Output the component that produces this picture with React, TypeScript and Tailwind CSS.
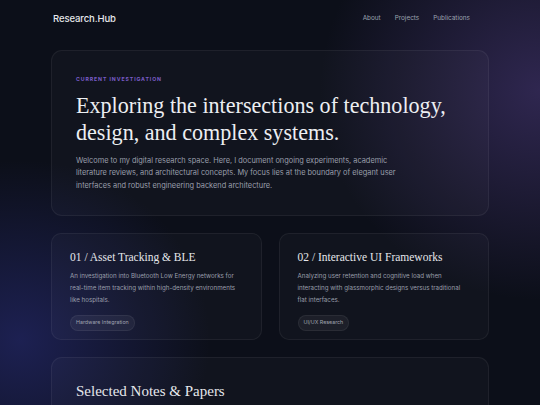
import React from "react";

const serif = { fontFamily: '"Liberation Serif", "DejaVu Serif", serif' };

export default function App() {
  return (
    <div
      className="relative w-[540px] h-[405px] overflow-hidden bg-[#0c0f19] text-white"
      style={{ fontFamily: 'Inter, "Noto Sans", sans-serif' }}
    >
      <div className="pointer-events-none absolute inset-0 bg-[radial-gradient(ellipse_220px_210px_at_540px_90px,rgba(76,58,125,0.55),transparent)]" />
      <div className="pointer-events-none absolute inset-0 bg-[radial-gradient(ellipse_190px_180px_at_20px_340px,rgba(40,44,120,0.6),transparent)]" />
      <div className="relative">
        <nav className="flex items-center h-[38px] pl-[53px] pr-[70px]">
          <span className="text-[9.5px] font-medium text-[#e5e7eb] tracking-[-0.1px]">Research.Hub</span>
          <div className="ml-auto flex gap-[14px] text-[6.4px] text-[#9ca3af]">
            <span>About</span>
            <span>Projects</span>
            <span>Publications</span>
          </div>
        </nav>
        <main className="mx-[51px] mt-[12px] flex flex-col gap-[17px]">
          <section className="rounded-[11px] border border-white/[0.06] bg-white/[0.025] pl-[24px] pr-[24px] pt-[25px] pb-[24px] h-[166px]">
            <div className="text-[5.2px] font-bold tracking-[0.9px] text-[#7a5cc8]">CURRENT INVESTIGATION</div>
            <h1 className="mt-[8px] text-[22.1px] leading-[27px] text-[#eceef2]" style={serif}>
              Exploring the intersections of technology,<br />design, and complex systems.
            </h1>
            <p className="mt-[9px] w-[324px] text-[7.4px] leading-[12.6px] text-[#9a9fab]">
              Welcome to my digital research space. Here, I document ongoing experiments, academic literature reviews, and architectural concepts. My focus lies at the boundary of elegant user interfaces and robust engineering backend architecture.
            </p>
          </section>
          <div className="grid grid-cols-2 gap-[17px]">
            <article className="rounded-[10px] border border-white/[0.06] bg-white/[0.025] h-[107px] px-[18px] pt-[16px]">
              <h2 className="text-[11.5px] leading-[15px] text-[#e5e7eb]" style={serif}>01 / Asset Tracking &amp; BLE</h2>
              <p className="mt-[5px] w-[172px] text-[6.2px] leading-[12px] text-[#9a9fab]">
                An investigation into Bluetooth Low Energy networks for real-time item tracking within high-density environments like hospitals.
              </p>
              <span className="mt-[3px] inline-block rounded-full border border-white/[0.06] bg-white/[0.05] px-[5px] py-[3px] text-[5.3px] text-[#a0a4b0]">Hardware Integration</span>
            </article>
            <article className="rounded-[10px] border border-white/[0.06] bg-white/[0.025] h-[107px] px-[18px] pt-[16px]">
              <h2 className="text-[11.5px] leading-[15px] text-[#e5e7eb]" style={serif}>02 / Interactive UI Frameworks</h2>
              <p className="mt-[5px] w-[172px] text-[6.2px] leading-[12px] text-[#9a9fab]">
                Analyzing user retention and cognitive load when interacting with glassmorphic designs versus traditional flat interfaces.
              </p>
              <span className="mt-[3px] inline-block rounded-full border border-white/[0.06] bg-white/[0.05] px-[5px] py-[3px] text-[5.3px] text-[#a0a4b0]">UI/UX Research</span>
            </article>
          </div>
          <section className="rounded-[11px] border border-white/[0.06] bg-white/[0.025] h-[80px] pl-[24px] pt-[22px]">
            <h2 className="text-[15px] text-[#e5e7eb]" style={serif}>Selected Notes &amp; Papers</h2>
          </section>
        </main>
      </div>
    </div>
  );
}
